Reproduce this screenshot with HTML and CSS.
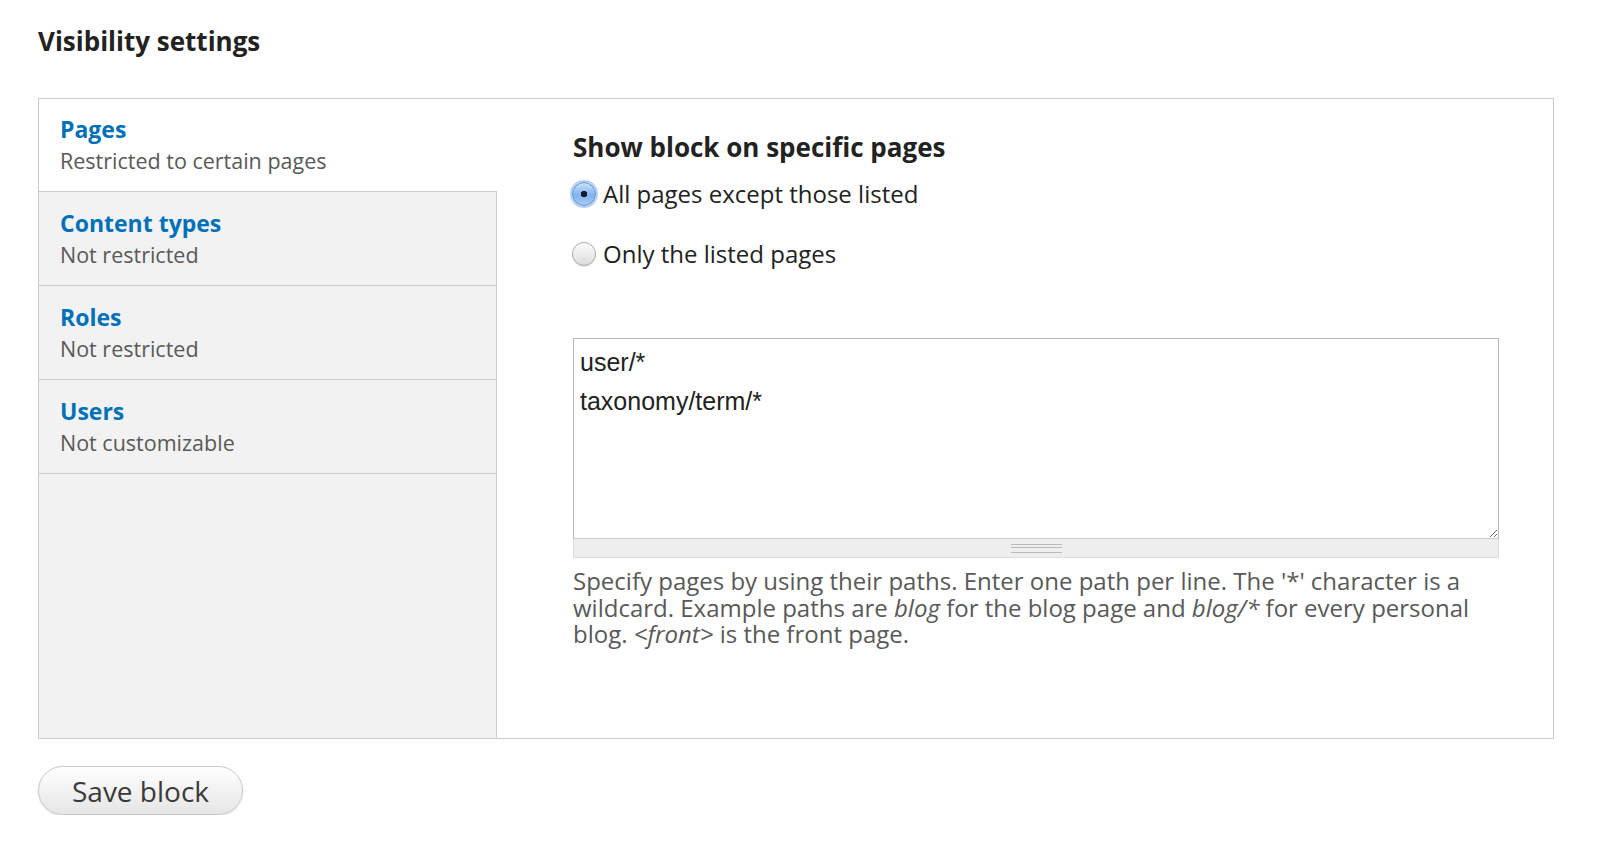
FILE: index.html
```html
<!DOCTYPE html>
<html lang="en">
<head>
  <meta charset="UTF-8" />
  <title>Visibility settings</title>
  <link rel="stylesheet" href="styles.css">
</head>
<body>

  <h2 class="section-title">Visibility settings</h2>

  <div class="vertical-tabs">
    <ul class="tabs-menu">
      <li class="tab selected">
        <a href="#" class="tab-title">Pages</a>
        <span class="tab-summary">Restricted to certain pages</span>
      </li>
      <li class="tab">
        <a href="#" class="tab-title">Content types</a>
        <span class="tab-summary">Not restricted</span>
      </li>
      <li class="tab">
        <a href="#" class="tab-title">Roles</a>
        <span class="tab-summary">Not restricted</span>
      </li>
      <li class="tab">
        <a href="#" class="tab-title">Users</a>
        <span class="tab-summary">Not customizable</span>
      </li>
    </ul>

    <div class="tab-pane">
      <div class="pane-label">Show block on specific pages</div>

      <label class="radio-row">
        <input type="radio" name="visibility" value="0" checked>
        <span>All pages except those listed</span>
      </label>
      <label class="radio-row">
        <input type="radio" name="visibility" value="1">
        <span>Only the listed pages</span>
      </label>

      <div class="textarea-wrap">
        <textarea name="pages" rows="5">user/*
taxonomy/term/*</textarea>
        <div class="grippie"><span></span></div>
      </div>

      <div class="description">
        Specify pages by using their paths. Enter one path per line. The '*' character is a
        wildcard. Example paths are <em>blog</em> for the blog page and <em>blog/*</em> for every personal
        blog. <em>&lt;front&gt;</em> is the front page.
      </div>
    </div>
  </div>

  <button type="submit" class="save-button">Save block</button>

</body>
</html>
```

FILE: styles.css
```css
body {
  margin: 0;
  padding: 0 46px 0 38px;
  font-family: "Open Sans", "Noto Sans", sans-serif;
  color: #222;
  background: #fff;
}

.section-title {
  font-size: 26px;
  line-height: 32px;
  font-weight: bold;
  color: #222;
  margin: 25px 0 41px 0;
}

.vertical-tabs {
  display: flex;
  border: 1px solid #ccc;
  min-height: 641px;
  box-sizing: border-box;
}

.tabs-menu {
  list-style: none;
  margin: 0;
  padding: 0;
  width: 458px;
  flex: 0 0 458px;
  box-sizing: border-box;
  background: #f2f2f2;
  border-right: 1px solid #ccc;
}

.tab {
  padding: 16px 10px 15px 21px;
  border-bottom: 1px solid #ccc;
}

.tab.selected {
  background: #fff;
  margin-right: -1px;
  padding-top: 15px;
}

.tab-title {
  display: block;
  font-size: 23px;
  line-height: 30px;
  font-weight: bold;
  color: #0071b8;
  text-decoration: none;
}

.tab-summary {
  display: block;
  margin-top: 2px;
  font-size: 21.5px;
  line-height: 30px;
  color: #595959;
}

.tab-pane {
  flex: 1;
  padding: 33px 54px 20px 76px;
}

.pane-label {
  font-size: 26px;
  line-height: 30px;
  font-weight: bold;
  color: #222;
  margin-bottom: 17px;
}

.radio-row {
  display: flex;
  align-items: center;
  gap: 7px;
  font-size: 24px;
  line-height: 30px;
  color: #222;
  margin-bottom: 30px;
  margin-left: -1px;
}

.radio-row input {
  appearance: none;
  -webkit-appearance: none;
  width: 24px;
  height: 24px;
  margin: 0;
  border-radius: 50%;
  border: 1px solid #a8a8a8;
  background: linear-gradient(#fdfdfd, #dcdcdc);
  box-shadow: inset 0 1px 1px rgba(255,255,255,0.8), 0 1px 1px rgba(0,0,0,0.1);
}

.radio-row input:checked {
  border-color: #5b8fd0;
  background: radial-gradient(circle, #1a1a2e 0 3px, transparent 3.5px),
              linear-gradient(#cfe3fb, #7fb2ee 55%, #a9cdf6);
  box-shadow: 0 0 0 2px rgba(120,170,235,0.55);
}

.textarea-wrap {
  margin-top: 69px;
}

.textarea-wrap textarea {
  display: block;
  width: 100%;
  height: 201px;
  box-sizing: border-box;
  margin: 0;
  padding: 4px 6px 2px;
  border: 1px solid #b8b8b8;
  border-bottom-color: #ccc;
  font-family: "Liberation Sans", Arial, sans-serif;
  font-size: 25px;
  line-height: 39px;
  color: #222;
  resize: vertical;
}

.grippie {
  height: 19px;
  box-sizing: border-box;
  background: #eee;
  border: 1px solid #ddd;
  border-top: 0;
  display: flex;
  justify-content: center;
  padding-top: 5px;
}

.grippie span {
  width: 51px;
  height: 7px;
  border-top: 1px solid #bbb;
  border-bottom: 1px solid #bbb;
  background: linear-gradient(#eee 2px, #bbb 2px, #bbb 3px, #eee 3px);
}

.description {
  margin-top: 10px;
  font-size: 24px;
  line-height: 26.5px;
  color: #595959;
}

.save-button {
  margin-top: 27px;
  width: 205px;
  height: 49px;
  border: 1px solid #c8c8c8;
  border-radius: 25px;
  background: linear-gradient(#fefefe, #e6e6e6);
  box-shadow: 0 1px 2px rgba(0,0,0,0.12);
  font-family: "Open Sans", "Noto Sans", sans-serif;
  font-size: 28px;
  color: #3b3b3b;
  padding: 0;
  cursor: pointer;
}
```
